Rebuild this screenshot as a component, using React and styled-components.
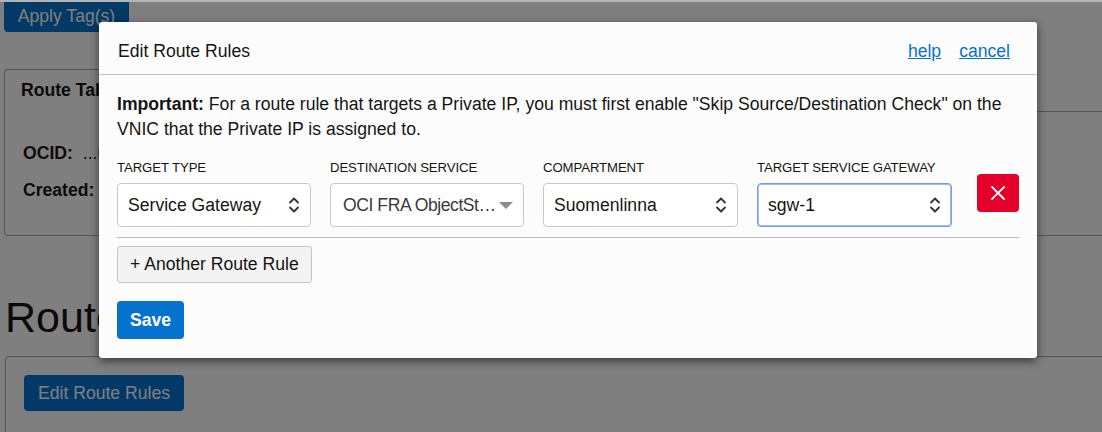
import React from 'react';
import styled, { createGlobalStyle } from 'styled-components';

const GlobalStyle = createGlobalStyle`
  html, body {
    margin: 0;
    padding: 0;
  }
  body {
    width: 1102px;
    height: 432px;
    overflow: hidden;
    background: #ffffff;
    color: #161513;
    font-family: "Liberation Sans", Arial, sans-serif;
    font-size: 17.6px;
  }
`;

/* ---------- page behind the dialog ---------- */

const Page = styled.div`
  position: relative;
  height: 432px;
  overflow: hidden;
  border-top: 2px solid #b4b4b4;
  box-sizing: border-box;
`;

const Toolbar = styled.div`
  height: 30px;
  padding-left: 4px;
`;

const PrimaryButton = styled.button`
  font-family: inherit;
  font-size: 17.6px;
  font-weight: ${(p) => (p.bold ? 700 : 400)};
  color: #fff;
  background: #0572ce;
  border: none;
  border-radius: 4px;
  padding: 0 ${(p) => p.pad || 14}px;
  height: ${(p) => p.h || 36}px;
  cursor: pointer;
`;

const ApplyButton = styled(PrimaryButton)`
  margin-top: -8px;
  height: 38px;
  width: 125px;
  padding: 6px 0 0;
`;

const Tabs = styled.div`
  margin: 37px 0 0 4px;
  width: 1120px;
`;

const TabStrip = styled.div`
  display: flex;
  border-bottom: 1px solid #a8a8a8;
`;

const ActiveTab = styled.div`
  height: 41px;
  padding: 0 16px;
  display: flex;
  align-items: center;
  font-weight: 700;
  border: 1px solid #a8a8a8;
  border-bottom-color: #fff;
  border-radius: 4px 4px 0 0;
  margin-bottom: -1px;
  background: #fff;
  width: 520px;
`;

const TabPanel = styled.div`
  height: 124px;
  box-sizing: border-box;
  border: 1px solid #a8a8a8;
  border-top: none;
  border-radius: 0 0 4px 4px;
  padding: 31px 18px 0;
  display: grid;
  grid-auto-rows: 26px;
  row-gap: 11px;
`;

const InfoRow = styled.div`
  display: flex;
  gap: 10px;
  b {
    font-weight: 700;
  }
`;

const Heading = styled.h2`
  margin: 56px 0 14px 5px;
  font-size: 43px;
  line-height: 50px;
  font-weight: 400;
  color: #161513;
`;

const Panel = styled.div`
  margin-left: 5px;
  width: 1120px;
  height: 120px;
  border: 1px solid #a8a8a8;
  border-radius: 4px;
  padding: 18px;
`;

/* ---------- dialog ---------- */

const Overlay = styled.div`
  position: absolute;
  inset: -2px 0 0 0;
  background: rgba(0, 0, 0, 0.5);
`;

const Dialog = styled.div`
  position: absolute;
  top: 20px;
  left: 99px;
  width: 938px;
  background: #fcfcfc;
  border-radius: 3px;
  box-shadow: 0 3px 10px rgba(0, 0, 0, 0.55);
`;

const DialogHeader = styled.div`
  height: 53px;
  box-sizing: border-box;
  display: flex;
  align-items: center;
  justify-content: space-between;
  padding: 6px 27px 0 19px;
  border-bottom: 1px solid #bcbfc7;
`;

const Title = styled.div`
  font-size: 17.6px;
  color: #161513;
`;

const Links = styled.div`
  display: flex;
  gap: 18px;
`;

const Link = styled.a`
  color: #0572ce;
  text-decoration: underline;
  cursor: pointer;
`;

const DialogBody = styled.div`
  padding: 17px 18px 19px;
`;

const Notice = styled.p`
  margin: 0;
  line-height: 25px;
  b {
    font-weight: 700;
  }
`;

const RuleRow = styled.div`
  margin-top: 17px;
  display: grid;
  grid-template-columns: 194px 194px 195px 195px 1fr;
  column-gap: 19px;
  padding-bottom: 10px;
  border-bottom: 1px solid #b9bcc3;
`;

const Field = styled.div`
  display: flex;
  flex-direction: column;
  gap: 7px;
`;

const Label = styled.label`
  font-size: 13.2px;
  line-height: 17px;
  color: #161513;
  letter-spacing: -0.1px;
`;

const SelectBox = styled.div`
  height: 44px;
  box-sizing: border-box;
  display: flex;
  align-items: center;
  gap: ${(p) => (p.muted ? 1 : 6)}px;
  padding: 0 10px;
  background: #fff;
  border: 1px solid ${(p) => (p.focused ? '#6f9fe4' : '#c6c9ce')};
  box-shadow: ${(p) => (p.focused ? 'inset 0 0 0 1px #9dbff0' : 'none')};
  border-radius: 4px;
  color: ${(p) => (p.muted ? '#3a3a3a' : '#161513')};
`;

const SelectValue = styled.span`
  flex: 1;
  min-width: 0;
  white-space: nowrap;
  overflow: hidden;
  text-overflow: ellipsis;
  padding-left: ${(p) => (p.inset ? 2 : 0)}px;
  letter-spacing: ${(p) => (p.inset ? '-0.45px' : 'normal')};
`;

const RemoveButton = styled.button`
  align-self: start;
  justify-self: end;
  margin-top: 15px;
  width: 42px;
  height: 38px;
  border: none;
  border-radius: 4px;
  background: #e4002b;
  display: flex;
  align-items: center;
  justify-content: center;
  cursor: pointer;
`;

const SecondaryButton = styled.button`
  margin-top: 8px;
  height: 37px;
  padding: 0 12px;
  font-family: inherit;
  font-size: 17.6px;
  color: #161513;
  background: #f3f3f4;
  border: 1px solid #c4c6ca;
  border-radius: 3px;
  cursor: pointer;
`;

const Actions = styled.div`
  margin-top: 18px;
`;

const UpDown = () => (
  <svg width="12" height="20" viewBox="0 0 12 20" fill="none" stroke="#333" strokeWidth="1.8" strokeLinecap="round" strokeLinejoin="round">
    <path d="M2 7.5 6 3.5 10 7.5" />
    <path d="M2 12.5 6 16.5 10 12.5" />
  </svg>
);

const Caret = () => (
  <svg width="14" height="7" viewBox="0 0 14 7">
    <path d="M0 0h14L7 7z" fill="#8c8c8c" />
  </svg>
);

const Cross = () => (
  <svg width="16" height="16" viewBox="0 0 16 16" stroke="#fff" strokeWidth="1.8" strokeLinecap="square">
    <path d="M2 2 14 14M14 2 2 14" />
  </svg>
);

const fields = [
  { label: 'TARGET TYPE', value: 'Service Gateway' },
  { label: 'DESTINATION SERVICE', value: 'OCI FRA ObjectStorage', muted: true },
  { label: 'COMPARTMENT', value: 'Suomenlinna' },
  { label: 'TARGET SERVICE GATEWAY', value: 'sgw-1', focused: true },
];

export default function App() {
  return (
    <>
      <GlobalStyle />
      <Page>
        <Toolbar>
          <ApplyButton>Apply Tag(s)</ApplyButton>
        </Toolbar>
        <Tabs>
          <TabStrip>
            <ActiveTab>Route Table Information</ActiveTab>
          </TabStrip>
          <TabPanel>
            <InfoRow>
              <b>OCID:</b> <span>...uvwq2fa</span>
            </InfoRow>
            <InfoRow>
              <b>Created:</b> <span>Tue, 24 Jul 2018</span>
            </InfoRow>
          </TabPanel>
        </Tabs>
        <Heading>Route Rules</Heading>
        <Panel>
          <PrimaryButton h={36} pad={14}>Edit Route Rules</PrimaryButton>
        </Panel>
        <Overlay />
        <Dialog>
          <DialogHeader>
            <Title>Edit Route Rules</Title>
            <Links>
              <Link>help</Link>
              <Link>cancel</Link>
            </Links>
          </DialogHeader>
          <DialogBody>
            <Notice>
              <b>Important:</b> For a route rule that targets a Private IP, you must first enable "Skip Source/Destination Check" on the VNIC that the Private IP is assigned to.
            </Notice>
            <RuleRow>
              {fields.map((f) => (
                <Field key={f.label}>
                  <Label>{f.label}</Label>
                  <SelectBox focused={f.focused} muted={f.muted}>
                    <SelectValue inset={f.muted}>{f.value}</SelectValue>
                    {f.muted ? <Caret /> : <UpDown />}
                  </SelectBox>
                </Field>
              ))}
              <RemoveButton aria-label="remove">
                <Cross />
              </RemoveButton>
            </RuleRow>
            <SecondaryButton>+ Another Route Rule</SecondaryButton>
            <Actions>
              <PrimaryButton bold h={38} pad={13}>Save</PrimaryButton>
            </Actions>
          </DialogBody>
        </Dialog>
      </Page>
    </>
  );
}
